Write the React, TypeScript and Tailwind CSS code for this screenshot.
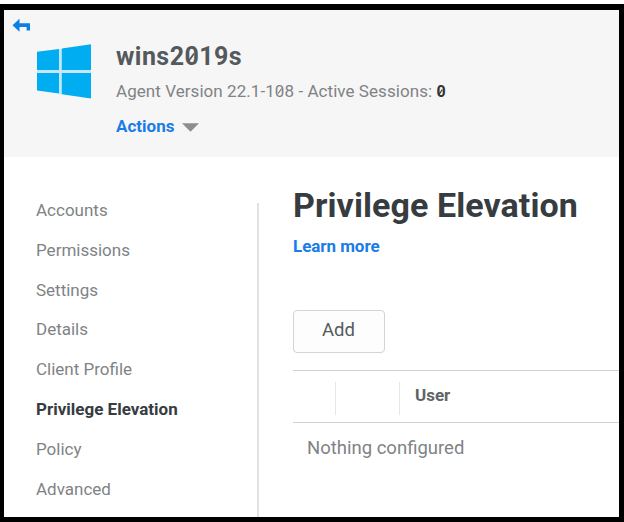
import React from "react";

const navItems = [
  "Accounts",
  "Permissions",
  "Settings",
  "Details",
  "Client Profile",
  "Privilege Elevation",
  "Policy",
  "Advanced",
];

function SlashedZero() {
  return (
    <span className="relative inline-block">
      0
      <svg className="absolute inset-0 h-full w-full" viewBox="0 0 10 20" preserveAspectRatio="none" aria-hidden="true">
        <path d="M3.2 12.4 6.8 7.8" stroke="currentColor" strokeWidth="1.2" />
      </svg>
    </span>
  );
}

function Header() {
  return (
    <header className="h-[147px] bg-[#f6f6f6] pt-[8px]">
      <svg className="ml-[8px] block h-[15px] w-[19px]" viewBox="0 0 19 15" aria-hidden="true">
        <path d="M0.5 7.2 7.5 0.8V5.2H18V12.5H14.6V9H7.5V13.8Z" fill="#0b7fe8" />
      </svg>
      <div className="flex pl-[33px]">
        <svg className="mt-[11px] block h-[55px] w-[54px]" viewBox="0 0 54 55" aria-hidden="true">
          <rect x="0" y="26" width="54" height="3" fill="#c5e7f8" />
          <path d="M22 5.2 25 4.8V50.6L22 50.2Z" fill="#c5e7f8" />
          <path d="M0 7.8 22 5V26H0ZM24.8 4.5 54 0.2V26H24.8ZM0 29H22V49.6L0 46.6ZM24.8 29H54V54.6L24.8 50.2Z" fill="#00adf0" />
        </svg>
        <div className="ml-[25px] pt-[8px]">
          <h2 className="text-[25px] leading-[32px] font-bold tracking-[0.45px] text-[#54595c]">
            wins2<SlashedZero />19s
          </h2>
          <p className="mt-[7px] text-[17px] leading-[22px] tracking-[0.06px] text-[#808385]">
            Agent Version 22.1-1<SlashedZero />8 - Active Sessions:{" "}
            <span className="text-[16px] font-bold text-[#303436]"><SlashedZero /></span>
          </p>
          <a className="mt-[12px] flex items-center text-[17px] leading-[22px] font-bold text-[#1a7ce8]">
            Actions
            <svg className="mt-[2px] ml-[8px] h-[9px] w-[17px]" viewBox="0 0 17 9" aria-hidden="true">
              <path d="M0 0.3H17L8.5 8.8Z" fill="#8b8f91" />
            </svg>
          </a>
        </div>
      </div>
    </header>
  );
}

function Sidebar() {
  return (
    <nav className="w-[255px] shrink-0 border-r-2 border-[#e1e1e2] pl-[32px]">
      <ul>
        {navItems.map((item) => (
          <li
            key={item}
            className={
              item === "Privilege Elevation"
                ? "h-[39.8px] text-[17px] leading-[15px] font-bold text-[#363c40]"
                : "h-[39.8px] text-[17px] leading-[15px] text-[#808385]"
            }
          >
            {item}
          </li>
        ))}
      </ul>
    </nav>
  );
}

export default function App() {
  return (
    <div className="h-[522px] w-[624px] bg-white pt-[4px] font-['Roboto',sans-serif]">
      <div className="flex h-[518px] flex-col overflow-hidden border-t-[6px] border-r-[5px] border-b-[5px] border-l-[4px] border-black bg-white">
        <Header />
        <div className="flex min-h-0 flex-1 pt-[46px]">
          <Sidebar />
          <main className="-mt-[20px] min-w-0 flex-1 pl-[34px]">
            <h1 className="text-[34px] leading-[44px] font-bold tracking-[0.08px] whitespace-nowrap text-[#363c40]">
              Privilege Elevation
            </h1>
            <a className="mt-[8px] block text-[17px] leading-[22px] font-bold tracking-[-0.05px] text-[#1a7ce8]">Learn more</a>
            <button className="mt-[53px] block h-[43px] w-[92px] rounded-[4px] border border-[#d2d4d5] bg-[#fdfdfd] pr-[1px] pb-[2px] text-[18.5px] text-[#54595c]">
              Add
            </button>
            <div className="mt-[17px] flex h-[53px] border-y border-[#d0d2d3] pt-[11px]">
              <span className="h-[33px] w-[43px] border-r border-[#e5e6e7]" />
              <span className="h-[33px] w-[64px] border-r border-[#e5e6e7]" />
              <span className="pl-[15px] text-[17px] leading-[26px] font-bold text-[#606467]">User</span>
            </div>
            <p className="mt-[13px] pl-[14px] text-[18.5px] leading-[24px] text-[#808385]">Nothing configured</p>
          </main>
        </div>
      </div>
    </div>
  );
}
